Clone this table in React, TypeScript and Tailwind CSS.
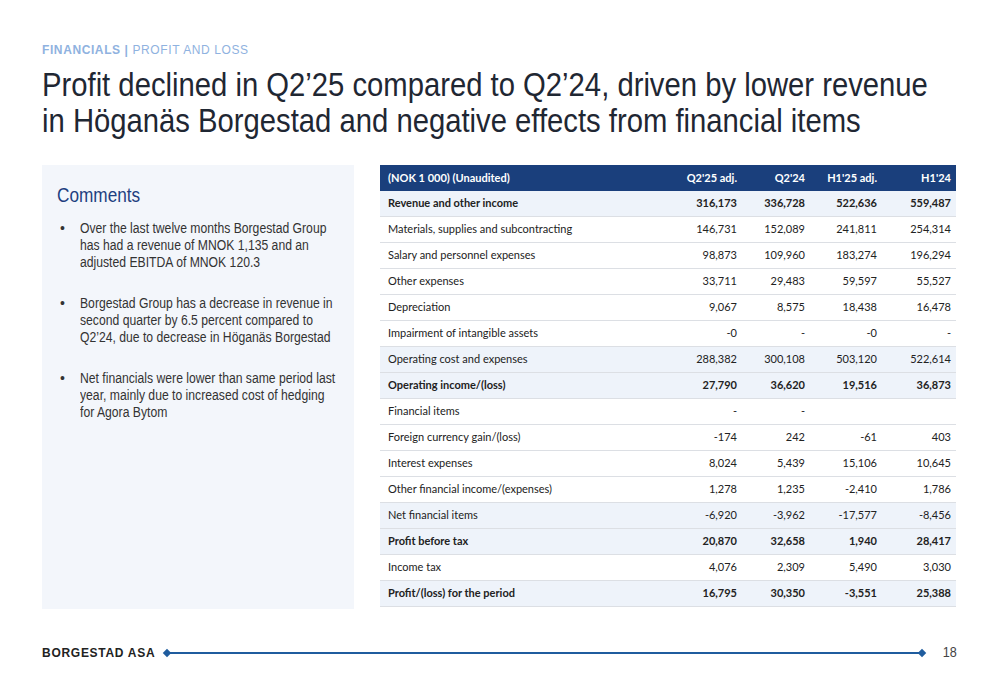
import React from 'react';

type Row = {
  label: string;
  values: string[];
  shaded?: boolean;
  bold?: boolean;
};

const ROWS: Row[] = [
  { label: 'Revenue and other income', values: ['316,173', '336,728', '522,636', '559,487'], shaded: true, bold: true },
  { label: 'Materials, supplies and subcontracting', values: ['146,731', '152,089', '241,811', '254,314'] },
  { label: 'Salary and personnel expenses', values: ['98,873', '109,960', '183,274', '196,294'] },
  { label: 'Other expenses', values: ['33,711', '29,483', '59,597', '55,527'] },
  { label: 'Depreciation', values: ['9,067', '8,575', '18,438', '16,478'] },
  { label: 'Impairment of intangible assets', values: ['-0', '-', '-0', '-'] },
  { label: 'Operating cost and expenses', values: ['288,382', '300,108', '503,120', '522,614'], shaded: true },
  { label: 'Operating income/(loss)', values: ['27,790', '36,620', '19,516', '36,873'], shaded: true, bold: true },
  { label: 'Financial items', values: ['-', '-', '', ''] },
  { label: 'Foreign currency gain/(loss)', values: ['-174', '242', '-61', '403'] },
  { label: 'Interest expenses', values: ['8,024', '5,439', '15,106', '10,645'] },
  { label: 'Other financial income/(expenses)', values: ['1,278', '1,235', '-2,410', '1,786'] },
  { label: 'Net financial items', values: ['-6,920', '-3,962', '-17,577', '-8,456'], shaded: true },
  { label: 'Profit before tax', values: ['20,870', '32,658', '1,940', '28,417'], shaded: true, bold: true },
  { label: 'Income tax', values: ['4,076', '2,309', '5,490', '3,030'] },
  { label: 'Profit/(loss) for the period', values: ['16,795', '30,350', '-3,551', '25,388'], shaded: true, bold: true },
];

const COMMENTS = [
  'Over the last twelve months Borgestad Group has had a revenue of MNOK 1,135 and an adjusted EBITDA of MNOK 120.3',
  'Borgestad Group has a decrease in revenue in second quarter by 6.5 percent compared to Q2’24, due to decrease in Höganäs Borgestad',
  'Net financials were lower than same period last year, mainly due to increased cost of hedging for Agora Bytom',
];

const sans = "font-['Liberation_Sans',Arial,sans-serif]";
const tableFont = "font-['Lato','Open_Sans',sans-serif]";

function Cells({ values }: { values: string[] }) {
  return (
    <>
      <div className="w-[84px] pr-[5px] text-right">{values[0]}</div>
      <div className="w-[68px] pr-[5px] text-right">{values[1]}</div>
      <div className="w-[72px] pr-[5px] text-right">{values[2]}</div>
      <div className="w-[74px] pr-[5px] text-right">{values[3]}</div>
    </>
  );
}

export default function App() {
  return (
    <div className="w-[1000px] h-[685px] bg-white relative overflow-hidden">
      <div className="px-[42px] pt-[42px]">
        <div className={`${sans} text-[12px] tracking-[0.05em] text-[#8fb2e0] leading-4`}>
          <span className="font-bold">FINANCIALS |</span> PROFIT AND LOSS
        </div>
        <h1
          className={`${sans} mt-[8px] text-[34px] leading-[36px] text-[#1f2733] whitespace-nowrap origin-top-left scale-x-[0.86]`}
        >
          Profit declined in Q2’25 compared to Q2’24, driven by lower revenue
          <br />
          in Höganäs Borgestad and negative effects from financial items
        </h1>
      </div>

      <div className="mt-[27px] flex pl-[42px] pr-[44px] gap-[26px] items-start">
        <div className="w-[312px] h-[444px] bg-[#f3f6fb] pl-[15px] pt-[18px]">
          <h2 className={`${sans} text-[20px] leading-6 text-[#1e3f80] origin-top-left scale-x-[0.86]`}>Comments</h2>
          <ul className={`${sans} mt-[13px] flex flex-col gap-[24px] text-[14px] leading-[17px] text-[#333]`}>
            {COMMENTS.map((c) => (
              <li key={c} className="flex">
                <span className="w-[23px] shrink-0 pl-[3px]">•</span>
                <span className="w-[296px] shrink-0 origin-top-left scale-x-[0.87]">{c}</span>
              </li>
            ))}
          </ul>
        </div>

        <div className={`${tableFont} flex-1 text-[11px] text-[#222]`}>
          <div className="flex items-center h-[26px] bg-[#1a3f7c] text-white font-bold">
            <div className="flex-1 pl-[8px]">(NOK 1 000) (Unaudited)</div>
            <Cells values={["Q2'25 adj.", "Q2'24", "H1'25 adj.", "H1'24"]} />
          </div>
          {ROWS.map((r) => (
            <div
              key={r.label}
              className={`flex items-center h-[26px] border-b border-[#dcdfe4] ${r.shaded ? 'bg-[#eef3fa]' : 'bg-white'} ${r.bold ? 'font-bold' : ''}`}
            >
              <div className="flex-1 pl-[8px]">{r.label}</div>
              <Cells values={r.values} />
            </div>
          ))}
        </div>
      </div>

      <div className="absolute left-[42px] right-[42px] top-[642px] flex items-center">
        <div className={`${sans} font-bold text-[12px] tracking-[0.06em] text-[#222]`}>BORGESTAD ASA</div>
        <div className="ml-[9px] flex-1 flex items-center">
          <div className="w-[6px] h-[6px] bg-[#1f5c9e] rotate-45" />
          <div className="flex-1 h-[2px] bg-[#1f5c9e]" />
          <div className="w-[6px] h-[6px] bg-[#1f5c9e] rotate-45" />
        </div>
        <div className={`${sans} ml-[17px] text-[14px] text-[#444] scale-x-[0.9]`}>18</div>
      </div>
    </div>
  );
}
